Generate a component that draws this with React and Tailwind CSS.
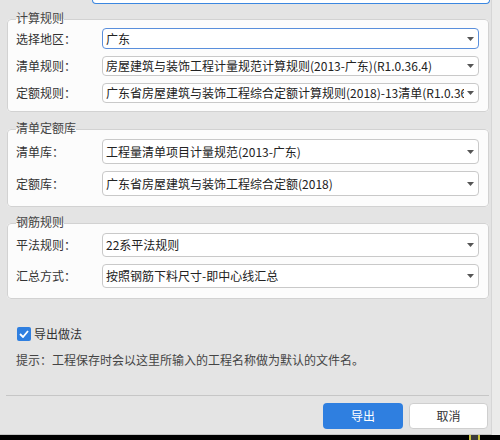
import React from 'react';

const font = { fontFamily: '"Noto Sans CJK SC", "Noto Sans", sans-serif' };

function Arrow() {
  return (
    <svg width="7" height="4" viewBox="0 0 7 4" className="shrink-0 ml-[3px]">
      <polygon points="0,0 7,0 3.5,4" fill="#555" />
    </svg>
  );
}

function Select({ value, h, active }) {
  return (
    <div
      className={`flex-1 min-w-0 flex items-center bg-white rounded-[4px] border pl-[3px] pr-[4px] ${h} ${
        active ? 'border-[#5a8fdc]' : 'border-[#c9c9c9]'
      }`}
    >
      <span className="flex-1 min-w-0 overflow-hidden whitespace-nowrap text-[12px] text-[#222] leading-[16px]">
        {value}
      </span>
      <Arrow />
    </div>
  );
}

function Row({ label, value, h, active }) {
  return (
    <div className="flex items-center">
      <span className="w-[86px] shrink-0 text-[12px] text-[#333] leading-[16px]">{label}</span>
      <Select value={value} h={h} active={active} />
    </div>
  );
}

function Group({ title, className, children }) {
  return (
    <fieldset
      className={`ml-[7px] mr-[2px] min-w-0 border border-[#d2d2d2] rounded-[4px] bg-[#fcfcfc] pl-[8px] pr-[9px] ${className}`}
    >
      <legend className="px-0 text-[12px] leading-[14px] pb-[2px] text-[#444]">{title}</legend>
      {children}
    </fieldset>
  );
}

export default function App() {
  return (
    <div className="w-[500px] h-[440px] flex flex-col bg-black overflow-hidden" style={font}>
      <div className="flex h-[435px]">
        {/* dialog body */}
        <div className="w-[492px] h-full bg-[#e4e4e4] border-b border-[#c4c4c4] border-r border-r-[#d6d6d6] flex flex-col">
          {/* tail of the field above */}
          <div className="ml-[92px] w-[398px] h-[4px] bg-white border-x border-b border-[#3b87e0] rounded-b-[4px]" />

          <Group title="计算规则" className="mt-[7px] pt-[1px] pb-[8px]">
            <div className="flex flex-col gap-[7px]">
              <Row label="选择地区：" value="广东" h="h-[21px]" active />
              <Row label="清单规则：" value="房屋建筑与装饰工程计量规范计算规则(2013-广东)(R1.0.36.4)" h="h-[20px]" />
              <Row
                label="定额规则："
                value="广东省房屋建筑与装饰工程综合定额计算规则(2018)-13清单(R1.0.36.4)"
                h="h-[20px]"
              />
            </div>
          </Group>

          <Group title="清单定额库" className="mt-[9px] pt-[2px] pb-[10px]">
            <div className="flex flex-col gap-[7px]">
              <Row label="清单库：" value="工程量清单项目计量规范(2013-广东)" h="h-[25px]" />
              <Row label="定额库：" value="广东省房屋建筑与装饰工程综合定额(2018)" h="h-[25px]" />
            </div>
          </Group>

          <Group title="钢筋规则" className="mt-[8px] pt-[2px] pb-[10px]">
            <div className="flex flex-col gap-[7px]">
              <Row label="平法规则：" value="22系平法规则" h="h-[24px]" />
              <Row label="汇总方式：" value="按照钢筋下料尺寸-即中心线汇总" h="h-[24px]" />
            </div>
          </Group>

          <div className="mt-[27px] ml-[17px] flex items-center gap-[3px]">
            <span className="w-[14px] h-[14px] rounded-[2px] bg-[#2f7fe0] flex items-center justify-center">
              <svg width="10" height="8" viewBox="0 0 10 8">
                <polyline points="1,4 4,7 9,1" fill="none" stroke="#fff" strokeWidth="1.8" />
              </svg>
            </span>
            <span className="text-[12px] text-[#333] leading-[16px]">导出做法</span>
          </div>

          <div className="mt-[10px] ml-[16px] text-[12px] text-[#444] leading-[16px]">
            提示：工程保存时会以这里所输入的工程名称做为默认的文件名。
          </div>

          <div className="mt-[27px] ml-[6px] mr-[2px] h-px bg-[#c6c6c6]" />

          <div className="mt-[7px] mr-[3px] flex justify-end gap-[6px]">
            <button className="w-[80px] h-[26px] rounded-[4px] bg-[#2f7fe0] text-white text-[12px]">导出</button>
            <button className="w-[79px] h-[26px] rounded-[4px] bg-white border border-[#cfcfcf] text-[#333] text-[12px]">
              取消
            </button>
          </div>
        </div>
        {/* strip of the window behind */}
        <div className="flex-1 h-full bg-[#ebebea]" />
      </div>
      <div className="flex-1 flex">
        <div className="w-[469px]" />
        <div className="w-[2px] bg-[#c9c23a]" />
        <div className="w-[7px] bg-[#3a3a3a]" />
        <div className="w-[2px] bg-[#c9c23a]" />
      </div>
    </div>
  );
}
